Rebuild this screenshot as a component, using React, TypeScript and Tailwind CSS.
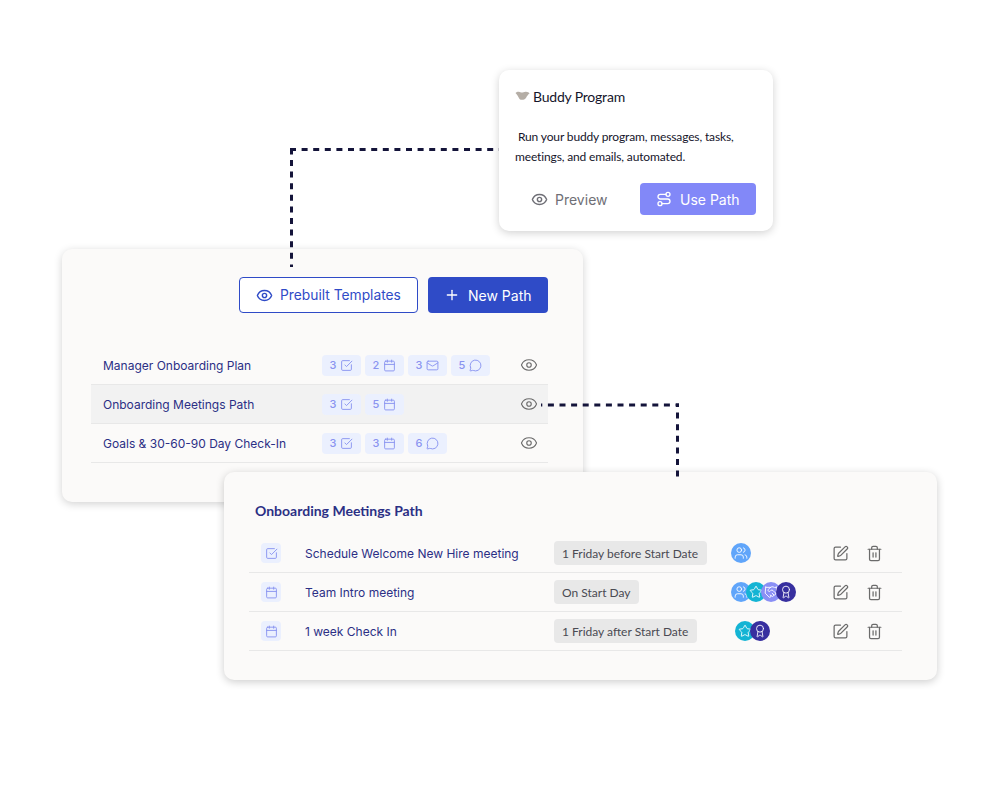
import React from 'react';
import { Calendar, Eye, Mail, MessageCircle, Plus, SquareCheckBig, SquarePen, Trash2, Users, Star, Handshake, Award, Route } from 'lucide-react';

type Chip = { count: number; icon: 'task' | 'cal' | 'mail' | 'chat' };

const paths: { name: string; chips: Chip[]; active?: boolean }[] = [
	{
		name: 'Manager Onboarding Plan',
		chips: [
			{ count: 3, icon: 'task' },
			{ count: 2, icon: 'cal' },
			{ count: 3, icon: 'mail' },
			{ count: 5, icon: 'chat' },
		],
	},
	{
		name: 'Onboarding Meetings Path',
		active: true,
		chips: [
			{ count: 3, icon: 'task' },
			{ count: 5, icon: 'cal' },
		],
	},
	{
		name: 'Goals & 30-60-90 Day Check-In',
		chips: [
			{ count: 3, icon: 'task' },
			{ count: 3, icon: 'cal' },
			{ count: 6, icon: 'chat' },
		],
	},
];

const steps: { name: string; icon: 'task' | 'cal'; when: string; avatars: string[]; shift?: boolean }[] = [
	{ name: 'Schedule Welcome New Hire meeting', icon: 'task', when: '1 Friday before Start Date', avatars: ['users'] },
	{ name: 'Team Intro meeting', icon: 'cal', when: 'On Start Day', avatars: ['users', 'star', 'hands', 'award'] },
	{ name: '1 week Check In', icon: 'cal', when: '1 Friday after Start Date', avatars: ['star', 'award'], shift: true },
];

function ChipIcon({ icon }: { icon: Chip['icon'] }) {
	const cls = 'w-[13px] h-[13px] text-[#8a94f0]';
	if (icon === 'task') return <SquareCheckBig className={cls} strokeWidth={1.75} />;
	if (icon === 'cal') return <Calendar className={cls} strokeWidth={1.75} />;
	if (icon === 'mail') return <Mail className={cls} strokeWidth={1.75} />;
	return <MessageCircle className={cls} strokeWidth={1.75} />;
}

function Avatar({ kind }: { kind: string }) {
	const iconCls = 'w-[14px] h-[14px] text-white';
	if (kind === 'users')
		return (
			<div className="w-5 h-5 rounded-full bg-[#60a5fa] flex items-center justify-center -ml-[5px] first:ml-0">
				<Users className={iconCls} strokeWidth={1.5} />
			</div>
		);
	if (kind === 'star')
		return (
			<div className="w-5 h-5 rounded-full bg-[#14b4d4] flex items-center justify-center -ml-[5px] first:ml-0">
				<Star className={iconCls} strokeWidth={1.5} />
			</div>
		);
	if (kind === 'hands')
		return (
			<div className="w-5 h-5 rounded-full bg-[#8a8ff5] flex items-center justify-center -ml-[5px] first:ml-0">
				<Handshake className={iconCls} strokeWidth={1.5} />
			</div>
		);
	return (
		<div className="w-5 h-5 rounded-full bg-[#372f9f] flex items-center justify-center -ml-[5px] first:ml-0">
			<Award className={iconCls} strokeWidth={1.5} />
		</div>
	);
}

export default function App() {
	return (
		<div className="relative w-[1000px] h-[800px] bg-white overflow-hidden font-['Inter',sans-serif]">
			{/* buddy program card */}
			<div className="absolute left-[499px] top-[70px] w-[274px] h-[161px] bg-white rounded-[10px] shadow-[0_2px_8px_rgba(0,0,0,0.18)] pt-[18px] pl-4 pr-[17px] font-['Lato',sans-serif]">
				<div className="flex items-center gap-[3px] h-[18px] -translate-y-px">
					<svg width="15" height="10" viewBox="0 0 15 10">
						<path d="M0.5 2 C2 0.5 4.5 0.5 6 1.5 C7.5 2 9 0.5 11 0.7 C12.5 0.8 14 1.5 14.5 2.5 C13 3.5 12 5 11 7 C9.5 9 6 9.5 4.5 8 C3.5 6 2 3.5 0.5 2 Z" fill="#b5aea6" />
					</svg>
					<span className="text-[14px] tracking-[-0.2px] text-[#15152b]">Buddy Program</span>
				</div>
				<p className="mt-[21px] text-[12px] tracking-[-0.14px] leading-[20px] text-[#15152b]">
					&nbsp;Run your buddy program, messages, tasks, meetings, and emails, automated.
				</p>
				<div className="flex items-center mt-[16px] font-['Inter',sans-serif] text-[14px]">
					<div className="flex items-center gap-[7px] pl-4 w-[125px] text-[#6f6f76]">
						<Eye className="w-[17px] h-[17px]" strokeWidth={2} />
						Preview
					</div>
					<div className="flex items-center gap-2 pl-4 w-[116px] h-[32px] rounded-[4px] bg-[#8288f8] text-white">
						<Route className="w-4 h-4" strokeWidth={2} />
						Use Path
					</div>
				</div>
			</div>

			{/* paths card */}
			<div className="absolute left-[62px] top-[249px] w-[521px] h-[253px] bg-[#fbfaf9] rounded-[10px] shadow-[0_2px_8px_rgba(0,0,0,0.18)] pl-[29px] pr-[35px] pt-[28px]">
				<div className="flex justify-end gap-[10px] text-[14px]">
					<div className="flex items-center gap-[7px] pl-4 w-[179px] h-9 rounded-[4px] border border-[#2f4bc7] text-[13.8px] text-[#2f4bc7] bg-white">
						<Eye className="w-[17px] h-[17px]" strokeWidth={2} />
						Prebuilt Templates
					</div>
					<div className="flex items-center gap-2 pl-4 w-[120px] h-9 rounded-[4px] bg-[#2f4bc7] text-white">
						<Plus className="w-4 h-4" strokeWidth={2} />
						New Path
					</div>
				</div>
				<div className="mt-[33px]">
					{paths.map((p) => (
						<div
							key={p.name}
							className={`flex items-center h-[39px] border-b border-[#e8e8e8] ${p.active ? 'bg-[#f2f2f2]' : ''}`}
						>
							<div className="w-[231px] pl-3 pt-[2px] text-[12px] text-[#2b2f85]">{p.name}</div>
							<div className="flex gap-[4px] w-[198px]">
								{p.chips.map((c, i) => (
									<div
										key={i}
										className="flex items-center justify-center gap-[4px] w-[39px] h-[21px] rounded-[4px] bg-[#ebf0fe] text-[11px] font-medium text-[#8a94f0]"
									>
										{c.count}
										<ChipIcon icon={c.icon} />
									</div>
								))}
							</div>
							<Eye className="w-[18px] h-[18px] text-[#6b6b6b]" strokeWidth={1.5} />
						</div>
					))}
				</div>
			</div>

			{/* meetings card */}
			<div className="absolute left-[224px] top-[472px] w-[713px] h-[208px] bg-[#fbfaf9] rounded-[10px] shadow-[0_2px_8px_rgba(0,0,0,0.2)] pl-[25px] pr-[35px] pt-[30px]">
				<div className="pl-[6px] text-[14px] leading-[18px] font-bold text-[#2b2f85] font-['Lato',sans-serif]">
					Onboarding Meetings Path
				</div>
				<div className="mt-[14px]">
					{steps.map((s) => (
						<div key={s.name} className="flex items-center h-[39px] border-b border-[#e8e8e8]">
							<div className="w-[56px] pl-3">
								<div className="w-5 h-5 rounded-[4px] bg-[#ebf0fe] flex items-center justify-center">
									<ChipIcon icon={s.icon} />
								</div>
							</div>
							<div className="w-[249px] pt-[2px] text-[12px] text-[#2b2f85]">{s.name}</div>
							<div className="w-[177px]">
								<div className="w-fit h-6 rounded-[4px] bg-[#e8e8e8] flex items-center pl-2 pr-[9px] pt-px text-[12px] text-[#4a4a52] font-['Lato',sans-serif]">
									{s.when}
								</div>
							</div>
							<div className={`w-[101px] flex ${s.shift ? 'pl-[4px]' : ''}`}>
								{s.avatars.map((a) => (
									<Avatar key={a} kind={a} />
								))}
							</div>
							<SquarePen className="w-[17px] h-[17px] text-[#6b6b6b]" strokeWidth={1.75} />
							<Trash2 className="ml-[17px] w-[17px] h-[17px] text-[#6b6b6b]" strokeWidth={1.75} />
						</div>
					))}
				</div>
			</div>

			{/* connectors, drawn over the cards */}
			<svg className="absolute left-0 top-0 pointer-events-none" width="1000" height="800">
				<g fill="none" stroke="#14143a" strokeWidth="3">
					<path d="M290 149.5 H499" strokeDasharray="6 5.6" />
					<path d="M291.5 148.4 V267" strokeDasharray="6 5.6" />
					<path d="M679 405 H541" strokeDasharray="6 5.6" strokeDashoffset="2.5" />
					<path d="M677.5 403.5 V477" strokeDasharray="6 5.6" strokeDashoffset="2.5" />
				</g>
			</svg>
		</div>
	);
}
